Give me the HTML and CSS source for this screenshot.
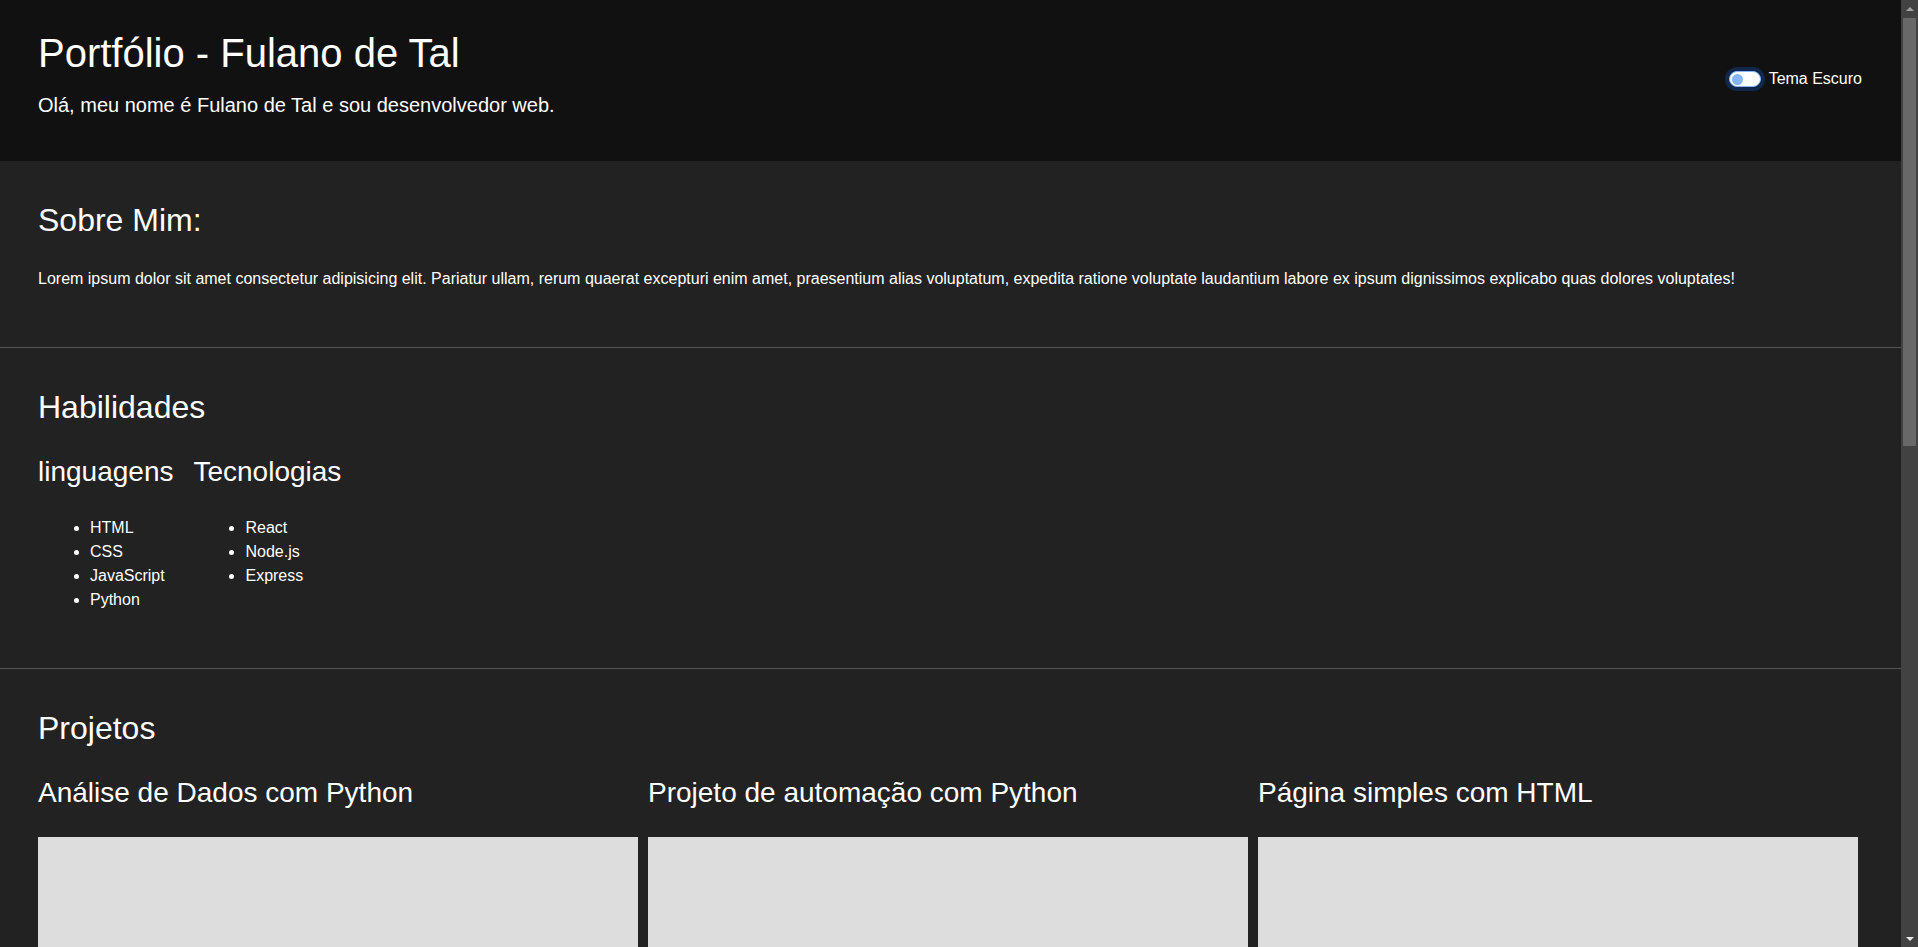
FILE: index.html
```html
<!DOCTYPE html>
<html lang="pt-BR">
<head>
<meta charset="UTF-8">
<title>Portfólio - Fulano de Tal</title>
<link rel="stylesheet" href="styles.css">
</head>
<body>
<header class="site-header">
  <div class="intro">
    <h1 class="intro-title">Portfólio - Fulano de Tal</h1>
    <p class="intro-lead">Olá, meu nome é Fulano de Tal e sou desenvolvedor web.</p>
  </div>
  <div class="theme-switch">
    <span class="switch-track" role="switch" aria-checked="false"><span class="switch-knob"></span></span>
    <span class="switch-label">Tema Escuro</span>
  </div>
</header>
<main>
  <section class="section">
    <h2 class="section-title">Sobre Mim:</h2>
    <p class="section-text">Lorem ipsum dolor sit amet consectetur adipisicing elit. Pariatur ullam, rerum quaerat excepturi enim amet, praesentium alias voluptatum, expedita ratione voluptate laudantium labore ex ipsum dignissimos explicabo quas dolores voluptates!</p>
  </section>
  <section class="section">
    <h2 class="section-title">Habilidades</h2>
    <div class="skills">
      <div class="skill-group">
        <h3 class="skill-title">linguagens</h3>
        <ul class="skill-list">
          <li>HTML</li>
          <li>CSS</li>
          <li>JavaScript</li>
          <li>Python</li>
        </ul>
      </div>
      <div class="skill-group">
        <h3 class="skill-title">Tecnologias</h3>
        <ul class="skill-list">
          <li>React</li>
          <li>Node.js</li>
          <li>Express</li>
        </ul>
      </div>
    </div>
  </section>
  <section class="section section-last">
    <h2 class="section-title">Projetos</h2>
    <div class="projects">
      <article class="project">
        <h3 class="project-title">Análise de Dados com Python</h3>
        <div class="project-image"></div>
      </article>
      <article class="project">
        <h3 class="project-title">Projeto de automação com Python</h3>
        <div class="project-image"></div>
      </article>
      <article class="project">
        <h3 class="project-title">Página simples com HTML</h3>
        <div class="project-image"></div>
      </article>
    </div>
  </section>
</main>
<div class="scrollbar" aria-hidden="true">
  <span class="scrollbar-arrow scrollbar-arrow-up"></span>
  <span class="scrollbar-thumb"></span>
  <span class="scrollbar-arrow scrollbar-arrow-down"></span>
</div>
</body>
</html>
```
FILE: styles.css
```css
* {
  box-sizing: border-box;
}

html {
  margin: 0;
  padding: 0;
}

body {
  margin: 0 17px 0 0;
  padding: 0;
  font-family: "Liberation Sans", Arial, sans-serif;
  font-size: 16px;
  line-height: 1.5;
  color: #fff;
  background: #222;
}

h1,
h2,
h3,
p,
ul {
  margin: 0;
}

h1,
h2,
h3 {
  font-weight: 400;
  line-height: 1.2;
}

/* header */
.site-header {
  display: flex;
  justify-content: space-between;
  align-items: flex-start;
  background: #111;
  padding: 29px 39px 41px 38px;
}

.intro-title {
  font-size: 40px;
  margin-bottom: 13px;
}

.intro-lead {
  font-size: 20px;
}

.theme-switch {
  display: flex;
  align-items: center;
  gap: 8px;
  height: 24px;
  margin-top: 38px;
}

.switch-track {
  display: flex;
  align-items: center;
  width: 32px;
  height: 16px;
  padding-left: 2px;
  border: 1px solid #86b7fe;
  border-radius: 16px;
  background: #fff;
  box-shadow: 0 0 0 4px rgba(13, 110, 253, 0.25);
}

.switch-knob {
  width: 11px;
  height: 11px;
  border-radius: 50%;
  background: #86b7fe;
}

.switch-label {
  font-size: 16px;
}

/* sections */
.section {
  padding: 40px 38px;
  border-bottom: 1px solid #555;
}

.section-title {
  font-size: 32px;
  margin-bottom: 28px;
}

.section-text {
  margin-bottom: 16px;
}

.skills {
  display: flex;
  gap: 20px;
}

.skill-title {
  font-size: 28px;
  margin-bottom: 28px;
}

.skill-list {
  padding-left: 52px;
  margin-bottom: 16px;
}

.projects {
  display: grid;
  grid-template-columns: repeat(3, 600px);
  column-gap: 10px;
}

.project-title {
  font-size: 28px;
  margin-bottom: 28px;
}

.project-image {
  height: 450px;
  background: #ddd;
}

/* window scrollbar, drawn over the right edge */
.scrollbar {
  position: fixed;
  top: 0;
  right: 0;
  width: 17px;
  height: 100vh;
  display: flex;
  flex-direction: column;
  background: #424242;
}

.scrollbar-arrow {
  display: flex;
  align-items: center;
  justify-content: center;
  height: 17px;
  flex: none;
}

.scrollbar-arrow-up::before {
  content: "";
  border-left: 4px solid transparent;
  border-right: 4px solid transparent;
  border-bottom: 4px solid #a3a3a3;
}

.scrollbar-arrow-down {
  margin-top: auto;
}

.scrollbar-arrow-down::before {
  content: "";
  border-left: 4px solid transparent;
  border-right: 4px solid transparent;
  border-top: 4px solid #e8e8e8;
}

.scrollbar-thumb {
  flex: none;
  height: 428px;
  margin: 1px 2px 0;
  background: #686868;
}
```
